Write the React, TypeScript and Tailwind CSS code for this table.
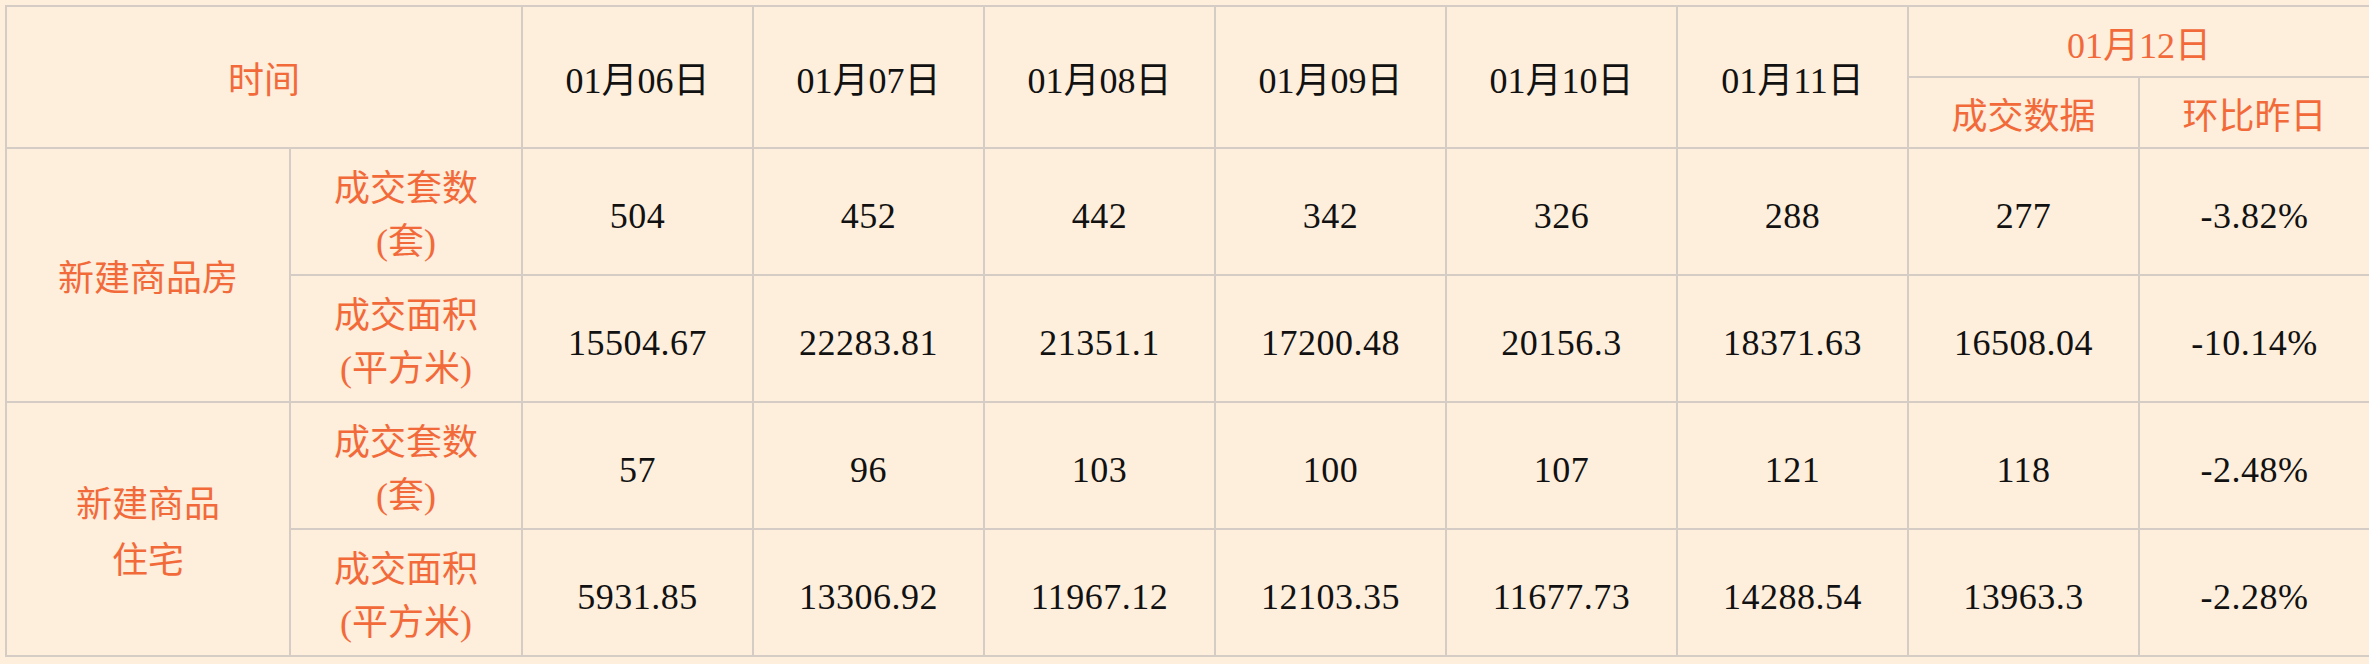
const dates = ["01月06日", "01月07日", "01月08日", "01月09日", "01月10日", "01月11日"];

type Row = { label: string; unit: string; values: string[]; today: string; change: string };

const groups: { name: React.ReactNode; rows: Row[] }[] = [
  {
    name: "新建商品房",
    rows: [
      { label: "成交套数", unit: "(套)", values: ["504", "452", "442", "342", "326", "288"], today: "277", change: "-3.82%" },
      { label: "成交面积", unit: "(平方米)", values: ["15504.67", "22283.81", "21351.1", "17200.48", "20156.3", "18371.63"], today: "16508.04", change: "-10.14%" },
    ],
  },
  {
    name: (
      <>
        新建商品
        <br />
        住宅
      </>
    ),
    rows: [
      { label: "成交套数", unit: "(套)", values: ["57", "96", "103", "100", "107", "121"], today: "118", change: "-2.48%" },
      { label: "成交面积", unit: "(平方米)", values: ["5931.85", "13306.92", "11967.12", "12103.35", "11677.73", "14288.54"], today: "13963.3", change: "-2.28%" },
    ],
  },
];

const cell = "border-2 border-[#d5ccc6] text-center align-middle px-0 pb-0 pt-2 font-normal";
const orange = "text-[#f26a3a]";

export default function App() {
  return (
    <div className="w-screen h-screen overflow-hidden bg-[#feeedc] font-['Liberation_Serif','Noto_Sans_CJK_SC',serif] text-[36px] text-[#111]">
      <table className="ml-[5px] mt-[5px] w-[2364px] table-fixed border-collapse">
        <colgroup>
          <col className="w-[284px]" />
          <col className="w-[232px]" />
          {Array.from({ length: 8 }).map((_, i) => (
            <col key={i} className="w-[231px]" />
          ))}
        </colgroup>
        <thead>
          <tr className="h-[71px]">
            <th colSpan={2} rowSpan={2} className={`${cell} ${orange}`}>
              时间
            </th>
            {dates.map((d) => (
              <th key={d} rowSpan={2} className={cell}>
                {d}
              </th>
            ))}
            <th colSpan={2} className={`${cell} ${orange}`}>
              01月12日
            </th>
          </tr>
          <tr className="h-[71px]">
            <th className={`${cell} ${orange}`}>成交数据</th>
            <th className={`${cell} ${orange}`}>环比昨日</th>
          </tr>
        </thead>
        <tbody>
          {groups.map((g, gi) =>
            g.rows.map((r, ri) => (
              <tr key={`${gi}-${ri}`} className="h-[127px]">
                {ri === 0 && (
                  <td rowSpan={2} className={`${cell} ${orange} px-10 leading-[56px]`}>
                    {g.name}
                  </td>
                )}
                <td className={`${cell} ${orange} leading-[53px]`}>
                  {r.label}
                  <br />
                  {r.unit}
                </td>
                {r.values.map((v, vi) => (
                  <td key={vi} className={`${cell} tracking-[0.5px]`}>
                    {v}
                  </td>
                ))}
                <td className={`${cell} tracking-[0.5px]`}>{r.today}</td>
                <td className={`${cell} tracking-[0.5px]`}>{r.change}</td>
              </tr>
            ))
          )}
        </tbody>
      </table>
    </div>
  );
}
